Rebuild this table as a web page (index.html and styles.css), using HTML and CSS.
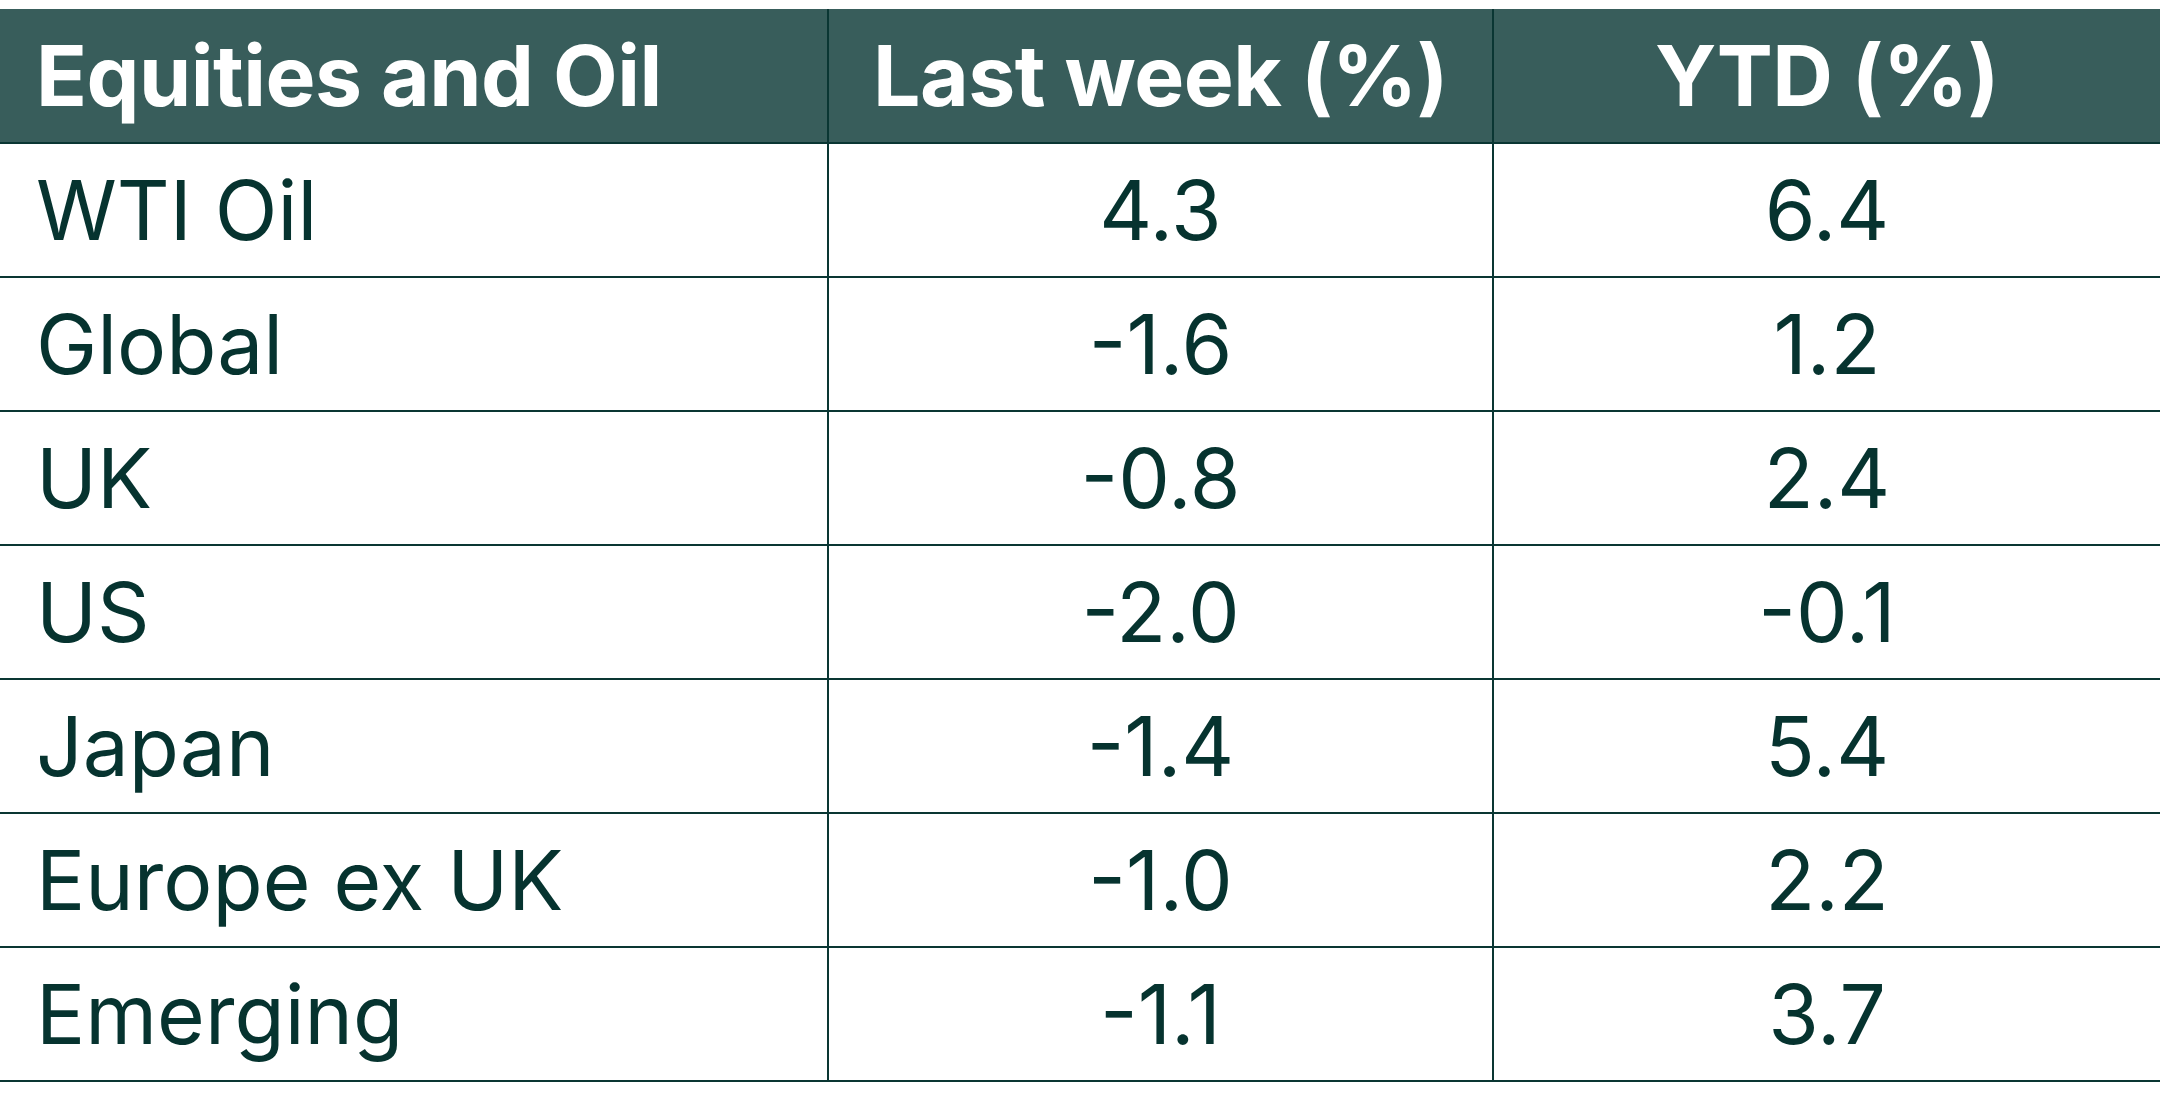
FILE: index.html
```html
<!DOCTYPE html>
<html lang="en">
<head>
  <meta charset="UTF-8" />
  <title>Equities and Oil</title>
  <link rel="stylesheet" href="styles.css">
</head>
<body>
  <table class="perf">
    <thead>
      <tr>
        <th class="name">Equities and Oil</th>
        <th>Last week (%)</th>
        <th>YTD (%)</th>
      </tr>
    </thead>
    <tbody>
      <tr><td class="name">WTI Oil</td><td>4.3</td><td>6.4</td></tr>
      <tr><td class="name">Global</td><td>-1.6</td><td>1.2</td></tr>
      <tr><td class="name">UK</td><td>-0.8</td><td>2.4</td></tr>
      <tr><td class="name">US</td><td>-2.0</td><td>-0.1</td></tr>
      <tr><td class="name">Japan</td><td>-1.4</td><td>5.4</td></tr>
      <tr><td class="name">Europe ex UK</td><td>-1.0</td><td>2.2</td></tr>
      <tr><td class="name">Emerging</td><td>-1.1</td><td>3.7</td></tr>
    </tbody>
  </table>
</body>
</html>
```

FILE: styles.css
```css
body {
  margin: 0;
  padding: 9px 0 0;
  background: #fff;
  font-family: Inter, "Noto Sans", sans-serif;
  color: #06332f;
}

.perf {
  width: 2160px;
  border-collapse: collapse;
  table-layout: fixed;
}

.perf th,
.perf td {
  box-sizing: border-box;
  height: 134px;
  padding: 0;
  text-align: center;
  vertical-align: middle;
  border-bottom: 2px solid #0a3633;
  border-left: 2px solid #0a3633;
}

.perf th:first-child,
.perf td:first-child {
  width: 828px;
  border-left: none;
}

.perf th:nth-child(2) {
  width: 665px;
}

.perf th {
  background: #385d5b;
  color: #fff;
  font-size: 84px;
  font-weight: 700;
  letter-spacing: -0.5px;
}

.perf td {
  font-size: 82px;
  font-weight: 400;
}

.perf .name {
  text-align: left;
  padding-left: 36px;
}
```
